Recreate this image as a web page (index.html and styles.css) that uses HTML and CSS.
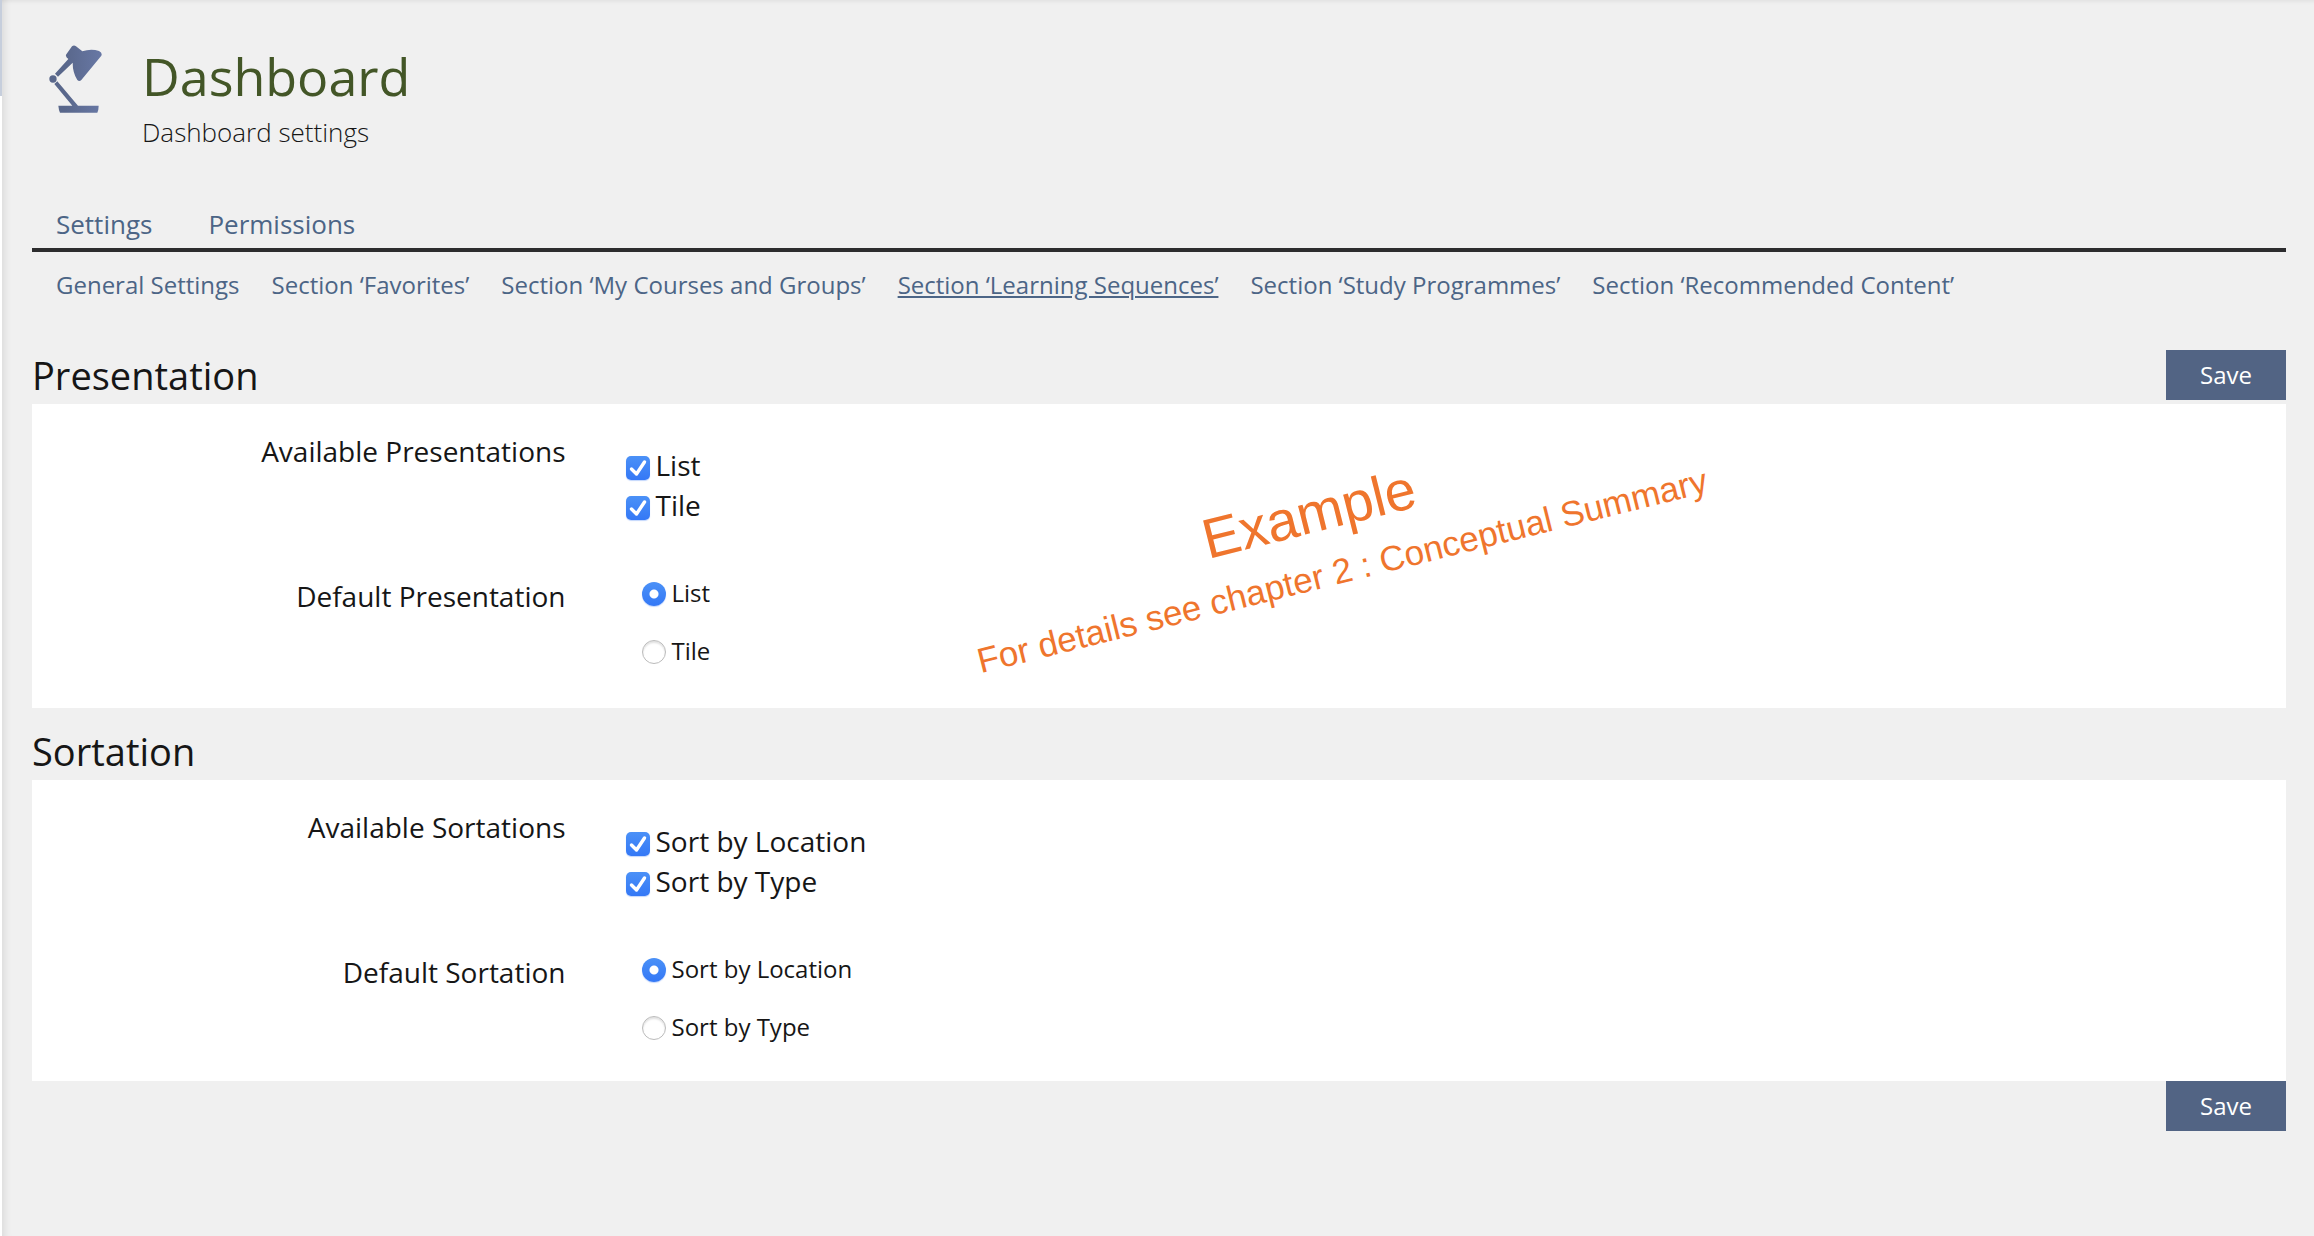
FILE: index.html
```html
<!DOCTYPE html>
<html lang="en">
  <head>
    <meta charset="UTF-8" />
    <meta name="viewport" content="width=device-width, initial-scale=1.0" />
    <title>Dashboard</title>
    <link rel="stylesheet" href="styles.css">
  </head>
  <body>
    <main>
      <header class="head">
        <svg class="head-icon" viewBox="147 133 159 204" aria-hidden="true">
          <defs>
            <linearGradient id="lamp" gradientUnits="userSpaceOnUse" x1="147" y1="0" x2="306" y2="0">
              <stop offset="0.3" stop-color="#59678b" />
              <stop offset="1" stop-color="#6878a5" />
            </linearGradient>
          </defs>
          <g fill="url(#lamp)">
            <path d="M216 137q6-5 12 0l19 15q26-9 50-1q11 5 7 14l-60 73q-6 6-12 0q-14-22-14-52l-44 42l-9-9l40-44q-9-5-7-13z" />
            <circle cx="159" cy="235" r="11" />
            <path d="M163 250l9-8l62 73h62q0 12-4 21h-112q-4-9-5-21h42z" />
          </g>
        </svg>
        <div>
          <h1>Dashboard</h1>
          <p>Dashboard settings</p>
        </div>
      </header>

      <nav class="tabs">
        <a href="#settings">Settings</a>
        <a href="#permissions">Permissions</a>
      </nav>
      <nav class="subtabs">
        <a href="#general">General Settings</a>
        <a href="#favorites">Section ‘Favorites’</a>
        <a href="#courses">Section ‘My Courses and Groups’</a>
        <a class="active" href="#sequences">Section ‘Learning Sequences’</a>
        <a href="#programmes">Section ‘Study Programmes’</a>
        <a href="#recommended">Section ‘Recommended Content’</a>
      </nav>

      <form>
        <div class="section-head">
          <h2>Presentation</h2>
          <button type="button">Save</button>
        </div>
        <div class="panel">
          <div class="row" role="group" aria-labelledby="available-presentations">
            <div class="name" id="available-presentations">Available Presentations</div>
            <div class="checks">
              <label><input type="checkbox" checked />List</label>
              <label><input type="checkbox" checked />Tile</label>
            </div>
          </div>
          <div class="row" role="radiogroup" aria-labelledby="default-presentation">
            <div class="name" id="default-presentation">Default Presentation</div>
            <div class="radios">
              <label><input type="radio" name="presentation" checked />List</label>
              <label><input type="radio" name="presentation" />Tile</label>
            </div>
          </div>
          <div class="note">
            <p class="note-title">Example</p>
            <p class="note-text">For details see chapter 2 : Conceptual Summary</p>
          </div>
        </div>

        <div class="section-head">
          <h2>Sortation</h2>
        </div>
        <div class="panel panel-last">
          <div class="row" role="group" aria-labelledby="available-sortations">
            <div class="name" id="available-sortations">Available Sortations</div>
            <div class="checks">
              <label><input type="checkbox" checked />Sort by Location</label>
              <label><input type="checkbox" checked />Sort by Type</label>
            </div>
          </div>
          <div class="row" role="radiogroup" aria-labelledby="default-sortation">
            <div class="name" id="default-sortation">Default Sortation</div>
            <div class="radios">
              <label><input type="radio" name="sortation" checked />Sort by Location</label>
              <label><input type="radio" name="sortation" />Sort by Type</label>
            </div>
          </div>
        </div>
        <div class="form-foot">
          <button type="button">Save</button>
        </div>
      </form>
    </main>
  </body>
</html>
```
FILE: styles.css
```css
* {
  margin: 0;
  padding: 0;
  box-sizing: border-box;
}

/* edge of the sidebar on the left */
body {
  padding-left: 2px;
  background: linear-gradient(#c6cedc 96px, #fff 96px);
  font-family: "Open Sans", sans-serif;
  color: #161616;
}

main {
  min-height: 100vh;
  padding: 45px 28px 0 30px;
  background-color: #f0f0f0;
  box-shadow: inset 10px 0 10px -9px rgba(0, 0, 0, 0.12),
    inset 0 5px 4px -4px rgba(0, 0, 0, 0.08);
}

.head {
  display: flex;
  gap: 40px;
  padding-left: 17px;
}

.head-icon {
  width: 53px;
  height: 68px;
}

.head h1 {
  margin-top: 3px;
  font-size: 52px;
  font-weight: 400;
  line-height: 56px;
  color: #435627;
}

.head p {
  margin-top: 10px;
  font-size: 26px;
  font-weight: 300;
  line-height: 36px;
}

.tabs,
.subtabs {
  display: flex;
  padding-left: 24px;
}

.tabs {
  gap: 56px;
  margin-top: 56px;
  padding-bottom: 6px;
  border-bottom: 4px solid #2c2c2e;
  font-size: 26px;
  line-height: 36px;
}

.subtabs {
  gap: 32px;
  padding-top: 16px;
  font-size: 24px;
  line-height: 34px;
}

a {
  text-decoration: none;
  color: #4c6586;
}

a:hover,
.active {
  text-decoration: underline;
}

form {
  margin-top: 48px;
}

.section-head {
  display: flex;
  justify-content: space-between;
  align-items: flex-start;
  height: 54px;
}

.section-head h2 {
  font-size: 38px;
  font-weight: 400;
  line-height: 50px;
}

button {
  width: 120px;
  height: 50px;
  padding-bottom: 2px;
  border: 0;
  background-color: #526484;
  color: #fff;
  font-family: inherit;
  font-size: 24px;
}

.panel {
  position: relative;
  display: flex;
  flex-direction: column;
  gap: 51px;
  margin-bottom: 18px;
  padding: 27px 0 40px;
  background-color: #fff;
}

.panel-last {
  margin-bottom: 0;
  padding-bottom: 37px;
}

.row {
  display: flex;
}

.name {
  width: 25%;
  padding-right: 30px;
  font-size: 28px;
  line-height: 40px;
  text-align: right;
}

.checks,
.radios {
  display: flex;
  flex-direction: column;
  align-items: flex-start;
  padding-left: 30px;
}

.checks {
  padding-top: 14px;
  font-size: 28px;
  line-height: 40px;
}

.radios {
  gap: 24px;
  padding-left: 46px;
  font-size: 24px;
  line-height: 34px;
}

input {
  appearance: none;
  width: 24px;
  height: 24px;
  margin-right: 6px;
  border-radius: 5px;
  vertical-align: -4px;
}

input:checked {
  background: linear-gradient(#4b91f7, #3478f6);
  box-shadow: 0 1px 1px rgba(52, 120, 246, 0.3);
}

input[type="checkbox"]:checked {
  background: url('data:image/svg+xml,<svg xmlns="http://www.w3.org/2000/svg" viewBox="0 0 24 24"><path d="M5.500 13L10.500 18L18.500 6" fill="none" stroke="white" stroke-width="3.4" stroke-linecap="round" stroke-linejoin="round"/></svg>'),
    linear-gradient(#4b91f7, #3478f6);
}

input[type="radio"] {
  border-radius: 50%;
}

input[type="radio"]:not(:checked) {
  border: 1px solid #bbb;
  box-shadow: inset 0 2px 2px rgba(0, 0, 0, 0.12);
}

input[type="radio"]:checked {
  background: radial-gradient(circle, #fff 4px, transparent 5px),
    linear-gradient(#4b91f7, #3478f6);
}

.form-foot {
  display: flex;
  justify-content: flex-end;
}

/* slanted remark lying over the first panel */
.note {
  position: absolute;
  top: 75px;
  left: 926px;
  width: 750px;
  font-family: "Liberation Sans", Arial, sans-serif;
  text-align: center;
  white-space: nowrap;
  color: #ef752d;
  transform: rotate(-14deg);
}

.note-title {
  padding-right: 36px;
  font-size: 56px;
  line-height: 60px;
}

.note-text {
  margin-top: 12px;
  font-size: 35px;
  line-height: 42px;
}
```
